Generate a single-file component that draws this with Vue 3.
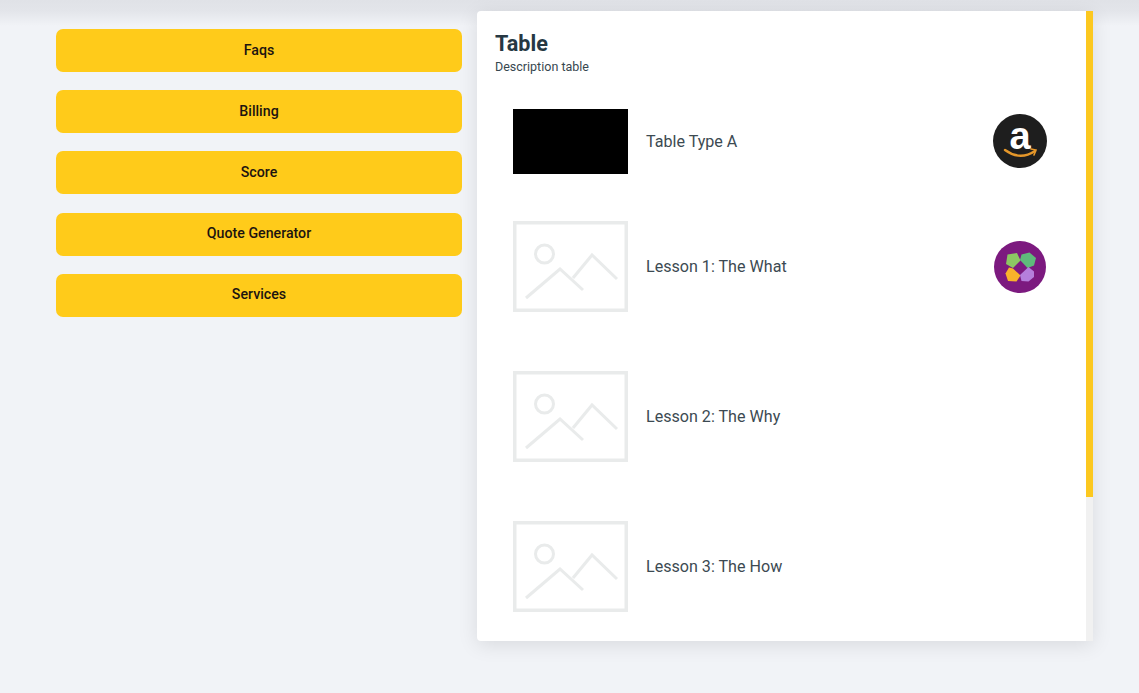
<template>
  <div class="page">
    <div class="layout">
      <!-- left menu -->
      <nav class="menu">
        <button v-for="item in menu" :key="item" class="menu-btn">{{ item }}</button>
      </nav>

      <!-- table card -->
      <section class="table-card">
        <div class="card-body">
          <header class="card-head">
            <h1 class="card-title">Table</h1>
            <p class="card-desc">Description table</p>
          </header>

          <div class="rows">
            <div class="row row-first">
              <div class="thumb-black"></div>
              <span class="row-label">Table Type A</span>
              <svg class="logo logo-amazon" viewBox="0 0 54 54">
                <circle cx="27" cy="27" r="27" fill="#1e1e1e" />
                <text x="27" y="35" text-anchor="middle" class="logo-a">a</text>
                <path d="M12 36 Q27 47 42 37" fill="none" stroke="#e5972a" stroke-width="2.4" stroke-linecap="round" />
                <path d="M38 35 L43 36 L41 41" fill="none" stroke="#e5972a" stroke-width="1.6" stroke-linecap="round" />
              </svg>
            </div>

            <div v-for="row in lessons" :key="row.label" class="row">
              <svg class="thumb" viewBox="0 0 115 91">
                <rect x="1.75" y="1.75" width="111.5" height="87.5" fill="none" stroke="#e9ebeb" stroke-width="3.5" />
                <circle cx="31.5" cy="33" r="9" fill="none" stroke="#e9ebeb" stroke-width="3" />
                <path d="M13 77 L47 48 L70 69" fill="none" stroke="#e9ebeb" stroke-width="3" />
                <path d="M60 57 L79 34 L104 58" fill="none" stroke="#e9ebeb" stroke-width="3" />
              </svg>
              <span class="row-label">{{ row.label }}</span>
              <svg v-if="row.logo" class="logo" viewBox="0 0 54 54">
                <circle cx="27" cy="27" r="26" fill="#7c1a7f" />
                <polygon points="14.5,14.5 24,13 27.5,20.5 20,28 13,24" fill="#8cc763" />
                <polygon points="28.5,14.5 36.5,12.5 43,18 41,25.5 34.5,28 27,20" fill="#5fbb7b" />
                <polygon points="16,27.5 20,28.5 27.5,35.5 23.5,41.5 15,41 12.5,33.5" fill="#f8b32b" />
                <polygon points="35.5,27 41,31.5 41,37 35.5,41.5 28.5,41 27,35" fill="#b57fdc" />
              </svg>
            </div>
          </div>
        </div>

        <!-- scrollbar -->
        <div class="scroll-track">
          <div class="scroll-thumb"></div>
        </div>
      </section>
    </div>
  </div>
</template>

<script setup>
const menu = ['Faqs', 'Billing', 'Score', 'Quote Generator', 'Services'];

const lessons = [
  { label: 'Lesson 1: The What', logo: true },
  { label: 'Lesson 2: The Why', logo: false },
  { label: 'Lesson 3: The How', logo: false },
];
</script>

<style>
html,
body {
  margin: 0;
  background: #f1f3f7;
  overflow: hidden;
}
</style>

<style scoped>
* {
  box-sizing: border-box;
  font-family: Roboto, 'Liberation Sans', sans-serif;
}

.page {
  width: 100%;
  height: 693px;
  padding-top: 11px;
  background: linear-gradient(#e0e2e7, #e3e5ea 11px, #f1f3f7 26px);
  overflow: hidden;
}

.layout {
  display: flex;
  align-items: flex-start;
  gap: 15px;
  padding-left: 56px;
}

.menu {
  width: 406px;
  padding-top: 18px;
  display: flex;
  flex-direction: column;
  gap: 18.2px;
}

.menu-btn {
  height: 43px;
  padding: 0 0 1.6px;
  border: none;
  border-radius: 7px;
  background: #ffcb1a;
  color: #1c1410;
  font-size: 14.2px;
  font-weight: 500;
}

.table-card {
  display: flex;
  width: 616px;
  height: 630px;
  background: #fff;
  border-radius: 4px 0 0 4px;
  overflow: hidden;
  box-shadow: 0 4px 20px rgba(0, 0, 0, 0.1);
}

.card-body {
  flex: 1;
  padding: 18px;
}

.scroll-track {
  width: 7px;
  background: #f1f1f1;
}

.scroll-thumb {
  height: 486px;
  background: #fcc81f;
}

.card-head {
  height: 62.5px;
  padding-top: 1px;
}

.card-title {
  margin: 0;
  font-size: 21.6px;
  line-height: 28px;
  font-weight: 700;
  color: #263843;
}

.card-desc {
  margin: 1px 0 0;
  font-size: 12.5px;
  line-height: 16px;
  color: #37474f;
}

.rows {
  display: flex;
  flex-direction: column;
}

.row {
  display: flex;
  align-items: center;
  gap: 18px;
  min-height: 150px;
  padding: 0 21px 0 18px;
}

.row-first {
  min-height: 100px;
}

.thumb-black {
  width: 115px;
  height: 65px;
  background: #000;
  flex: none;
}

.thumb {
  width: 115px;
  height: 91px;
  flex: none;
}

.row-label {
  flex: 1;
  font-size: 16.1px;
  color: #3c4a52;
}

.logo {
  width: 54px;
  height: 54px;
  flex: none;
}

.logo-amazon {
  margin-bottom: 1px;
}

.logo-a {
  font-family: 'Liberation Sans', sans-serif;
  font-size: 38px;
  font-weight: 700;
  fill: #fff;
}
</style>
